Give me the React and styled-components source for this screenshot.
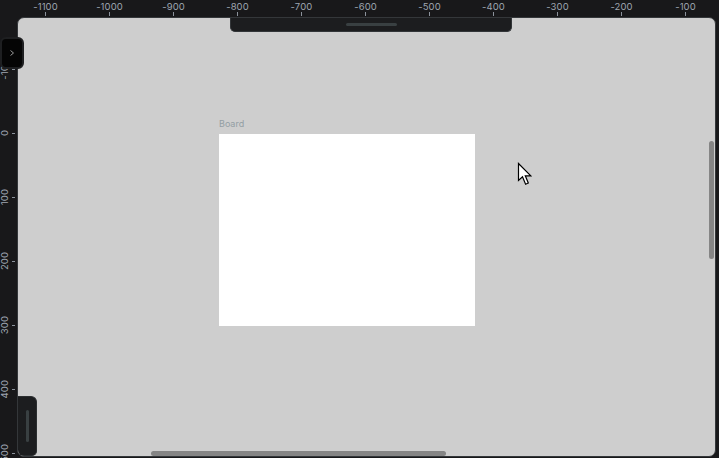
import React from "react";
import styled, { createGlobalStyle } from "styled-components";

const GlobalStyle = createGlobalStyle`
    html, body { margin: 0; padding: 0; background: #18181a; }
    body { font-family: Inter, "Liberation Sans", sans-serif; }
`;

const Workspace = styled.div`
    position: relative;
    width: 719px;
    height: 458px;
    display: grid;
    grid-template-columns: 17px 1fr 3px;
    grid-template-rows: 17px 1fr 1px;
    background: #18181a;
    overflow: hidden;
`;

const TopRuler = styled.div`
    grid-column: 1 / -1;
    display: flex;
    padding-left: 13.5px;
    overflow: hidden;
`;

const HMark = styled.div`
    flex: 0 0 64px;
    display: flex;
    flex-direction: column;
    align-items: center;
`;

const RulerLabel = styled.span`
    font-size: 9.5px;
    line-height: 10px;
    letter-spacing: 0.1px;
    color: #9ea5b0;
    white-space: nowrap;
`;

const HLabel = styled(RulerLabel)`
    margin-top: 2px;
`;

const HTick = styled.i`
    width: 1px;
    height: 4px;
    background: #8b929b;
`;

const LeftRuler = styled.div`
    grid-column: 1;
    grid-row: 2 / -1;
    display: flex;
    flex-direction: column;
    padding-top: 20.5px;
    overflow: hidden;
`;

const VMark = styled.div`
    flex: 0 0 64px;
    display: flex;
    align-items: center;
    justify-content: flex-end;
    gap: 2px;
    padding-right: 2px;
`;

const VLabel = styled(RulerLabel)`
    writing-mode: vertical-rl;
    transform: rotate(180deg);
`;

const VTick = styled.i`
    width: 3px;
    height: 1px;
    background: #8b929b;
`;

const Canvas = styled.div`
    grid-column: 2;
    grid-row: 2;
    position: relative;
    background: #cecece;
    border: 1px solid #34373a;
    border-radius: 7px;
    overflow: hidden;
`;

const ToolbarTab = styled.div`
    position: absolute;
    top: -1px;
    left: 212px;
    width: 280px;
    height: 14px;
    background: #1c1d1f;
    border: 1px solid #323538;
    border-top: none;
    border-radius: 0 0 5px 5px;
    display: flex;
    justify-content: center;
    align-items: center;
`;

const Handle = styled.div`
    width: ${p => (p.$vertical ? "3px" : "51px")};
    height: ${p => (p.$vertical ? "32px" : "3px")};
    border-radius: 2px;
    background: #394042;
`;

const Board = styled.div`
    position: absolute;
    left: 201px;
    top: 100px;
    display: flex;
    flex-direction: column;
    gap: 4px;
`;

const BoardTitle = styled.span`
    font-size: 9px;
    line-height: 12px;
    color: #939ea4;
`;

const BoardSheet = styled.div`
    width: 256px;
    height: 192px;
    background: #ffffff;
`;

const Cursor = styled.svg`
    position: absolute;
    left: 499px;
    top: 144px;
`;

const Scrollbar = styled.div`
    position: absolute;
    background: #858585;
    border-radius: 3px;
`;

const VScroll = styled(Scrollbar)`
    right: 1px;
    top: 123px;
    width: 5px;
    height: 118px;
`;

const HScroll = styled(Scrollbar)`
    bottom: 0;
    left: 133px;
    width: 295px;
    height: 5px;
`;

const LayersDock = styled.div`
    position: absolute;
    left: 0;
    bottom: 0;
    width: 18px;
    height: 58px;
    background: #1c1d1f;
    border: 1px solid #2b2e30;
    border-left: none;
    border-radius: 0 6px 5px 0;
    display: flex;
    justify-content: center;
    align-items: center;
`;

const SideToggle = styled.button`
    position: absolute;
    left: 0;
    top: 37px;
    width: 24px;
    height: 32px;
    padding: 0;
    background: #050505;
    border: 2px solid #1e1f21;
    border-radius: 6px;
    display: flex;
    align-items: center;
    justify-content: center;
    cursor: pointer;
`;

const hMarks = [-1100, -1000, -900, -800, -700, -600, -500, -400, -300, -200, -100];
const vMarks = [-100, 0, 100, 200, 300, 400, 500];

export default function App() {
    return (
        <>
            <GlobalStyle />
            <Workspace>
                {/* линейка сверху */}
                <TopRuler>
                    {hMarks.map(m => (
                        <HMark key={m}>
                            <HLabel>{m}</HLabel>
                            <HTick />
                        </HMark>
                    ))}
                </TopRuler>

                {/* линейка слева */}
                <LeftRuler>
                    {vMarks.map(m => (
                        <VMark key={m}>
                            <VLabel>{m}</VLabel>
                            <VTick />
                        </VMark>
                    ))}
                </LeftRuler>

                <Canvas>
                    <ToolbarTab>
                        <Handle />
                    </ToolbarTab>

                    <Board>
                        <BoardTitle>Board</BoardTitle>
                        <BoardSheet />
                    </Board>

                    <Cursor width="16" height="25" viewBox="0 0 16 25">
                        <path
                            d="M1.5 1.5 L1.5 18.5 L5.5 14.8 L8.6 22.2 L11.3 21 L8.3 13.8 L13.8 13.8 Z"
                            fill="#ffffff"
                            stroke="#000000"
                            strokeWidth="1.2"
                            strokeLinejoin="miter"
                        />
                    </Cursor>

                    <VScroll />
                    <HScroll />

                    <LayersDock>
                        <Handle $vertical />
                    </LayersDock>
                </Canvas>

                <SideToggle aria-label="Open sidebar">
                    <svg width="8" height="8" viewBox="0 0 8 8">
                        <path d="M2.5 1.5 L5.5 4 L2.5 6.5" fill="none" stroke="#9a9a9a" strokeWidth="1" />
                    </svg>
                </SideToggle>
            </Workspace>
        </>
    );
}
